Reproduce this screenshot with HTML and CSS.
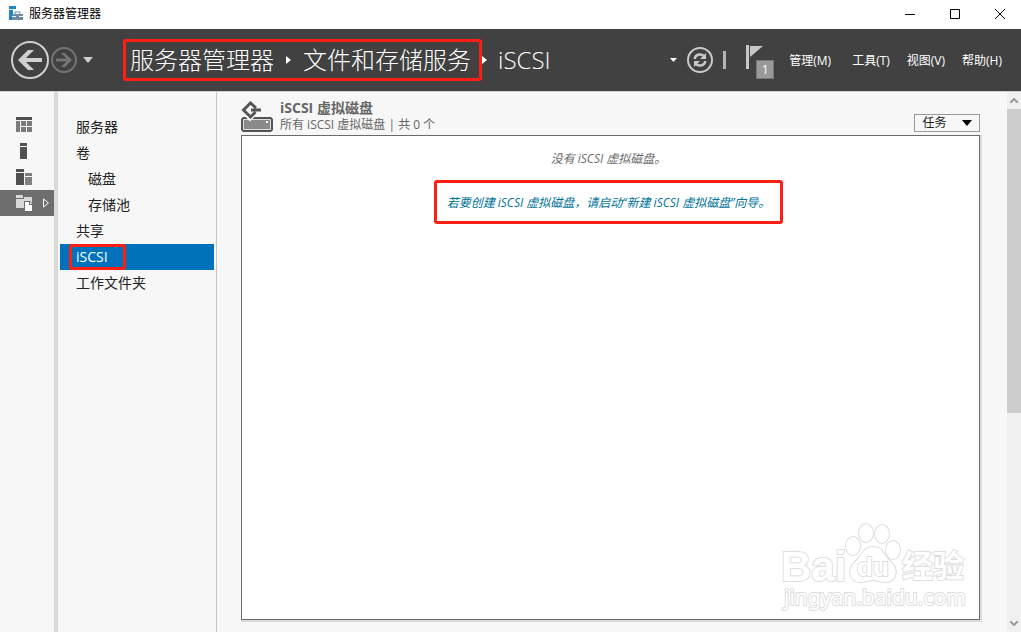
FILE: index.html
```html
<!DOCTYPE html>
<html lang="zh-CN">

<head>
  <meta charset="utf-8">
  <meta name="viewport" content="width=device-width, initial-scale=1">
  <title>服务器管理器</title>
  <link rel="stylesheet" href="styles.css">
</head>
<body>
  <div class="titlebar">
    <svg class="app-icon" width="15" height="15" viewBox="0 0 15 15">
      <path fill="#1b87c9" d="M0 0h7v3H0zM0 4h4v10H0z"/>
      <path fill="#6f8ba3" d="M3 8h11v6H3z"/>
      <path fill="none" stroke="#6f8ba3" d="M6 8V6h5v2"/>
      <path stroke="#fff" d="M3 10.5h4M10 10.5h4"/>
    </svg>
    <h1>服务器管理器</h1>
    <div class="window-controls">
      <button aria-label="最小化"><svg width="10" height="10"><path d="M0 5.500h10"/></svg></button>
      <button aria-label="最大化"><svg width="10" height="10"><path d="M.5.5h9v9h-9z"/></svg></button>
      <button aria-label="关闭"><svg width="10" height="10"><path d="M0 0l10 10M10 0L0 10"/></svg></button>
    </div>
  </div>

  <header class="toolbar">
    <button class="back" aria-label="后退">
      <svg width="38" height="38" viewBox="0 0 38 38">
        <circle cx="19" cy="19" r="18" fill="none" stroke="#d0d0d0" stroke-width="2"/>
        <path fill="#d0d0d0" d="M7 19l10-10h6l-8 8h16v4H15l8 8h-6z"/>
      </svg>
    </button>
    <button class="forward" aria-label="前进">
      <svg width="26" height="26" viewBox="0 0 26 26">
        <circle cx="13" cy="13" r="12" fill="none" stroke="#747474" stroke-width="2"/>
        <path fill="#747474" d="M21 13l-7-7h-4l5.500 5.500H5v3h10.500L10 20h4z"/>
      </svg>
    </button>
    <button class="history" aria-label="历史记录">
      <svg width="10" height="6"><path fill="#d0d0d0" d="M0 0h10L5 6z"/></svg>
    </button>
    <nav class="breadcrumb" aria-label="路径">
      <span class="crumbs highlight">
        <a href="#">服务器管理器</a>
        <svg width="5" height="8"><path fill="#fff" d="M0 0l5 4-5 4z"/></svg>
        <a href="#">文件和存储服务</a>
      </span>
      <svg width="5" height="8"><path fill="#fff" d="M0 0l5 4-5 4z"/></svg>
      <a class="current" href="#">iSCSI</a>
    </nav>
    <div class="tools">
      <button aria-label="更多"><svg width="7" height="4"><path fill="#fff" d="M0 0h7L3.500 4z"/></svg></button>
      <button aria-label="刷新">
        <svg width="26" height="26" viewBox="0 0 26 26" fill="none" stroke="#c8c8c8" stroke-width="2">
          <circle cx="13" cy="13" r="12"/>
          <path d="M7.500 12c1-5 7-6 10-2.500M18.500 14c-1 5-7 6-10 2.500" stroke-width="2.500"/>
          <path d="M19 6v6h-6zM7 20v-6h6z" fill="#c8c8c8" stroke="none"/>
        </svg>
      </button>
      <span class="separator"></span>
      <button class="flag" aria-label="通知">
        <svg width="18" height="24"><path fill="#c8c8c8" d="M0 0h3v24H0zM4 1h13L4 12z"/></svg>
        <span class="badge">1</span>
      </button>
    </div>
    <div class="menu">
      <button class="manage">管理(M)</button>
      <button>工具(T)</button>
      <button>视图(V)</button>
      <button>帮助(H)</button>
    </div>
  </header>

  <div class="workspace">
    <nav class="rail" aria-label="页面">
      <a href="#" aria-label="仪表板">
        <svg width="16" height="16">
          <path fill="#505050" d="M0 0h16v3H0z"/>
          <path fill="#7b7b7b" d="M0 4h4v11H0zM5 4h5v5H5zM11 4h5v5h-5zM5 10h5v5H5zM11 10h5v5h-5z"/>
        </svg>
      </a>
      <a href="#" aria-label="本地服务器">
        <svg width="16" height="16"><path fill="#505050" d="M4 0h7v3H4zM4 4h7v12H4z"/></svg>
      </a>
      <a href="#" aria-label="所有服务器">
        <svg width="16" height="16">
          <path fill="#505050" d="M0 0h8v3H0zM0 4h8v12H0z"/>
          <path fill="#808080" d="M9 4h7v3H9zM9 8h7v8H9z"/>
        </svg>
      </a>
      <a class="selected" href="#" aria-label="文件和存储服务">
        <svg width="16" height="16">
          <path fill="#d9d9d9" d="M0 0h6l1 1v2H0zM0 4h8V2h8v11H0z"/>
          <path fill="#6e6e6e" d="M8 6h6l2 2v8H8z"/>
          <path fill="#fff" d="M9 7h4v3h3v6H9z"/>
          <path fill="#fff" d="M14 7l2 2h-2z"/>
        </svg>
        <svg class="arrow" width="7" height="10"><path fill="none" stroke="#fff" d="M.5 1l5 4-5 4z"/></svg>
      </a>
    </nav>

    <nav class="sections" aria-label="文件和存储服务">
      <a href="#">服务器</a>
      <a href="#">卷</a>
      <a class="sub" href="#">磁盘</a>
      <a class="sub" href="#">存储池</a>
      <a href="#">共享</a>
      <a class="selected" href="#"><span class="highlight">iSCSI</span></a>
      <a href="#">工作文件夹</a>
    </nav>

    <main>
      <div class="panel-head">
        <svg width="32" height="32" viewBox="0 0 32 32">
          <path fill="#555" d="M2 16h28l2 2v11l-2 2H2l-2-2V18z"/>
          <path fill="#898989" stroke="#ddd" d="M2.500 18.500h27v10h-27z"/>
          <path fill="#fff" d="M25 20h2v2h-2z"/>
          <path fill="none" stroke="#f7f7f7" stroke-width="5" d="M15 8L9 2.500 2.500 10 9 17l4-4"/>
          <path fill="none" stroke="#555" stroke-width="3" d="M15 7L9.500 2 2.500 9l7 7 5-5M10 9h10"/>
        </svg>
        <div class="panel-title">
          <h2>iSCSI 虚拟磁盘</h2>
          <p>所有 iSCSI 虚拟磁盘 | 共 0 个</p>
        </div>
        <button class="tasks">任务 <svg width="10" height="6"><path d="M0 0h10L5 6z"/></svg></button>
      </div>
      <div class="panel">
        <p>没有 iSCSI 虚拟磁盘。</p>
        <a class="highlight" href="#">若要创建 iSCSI 虚拟磁盘，请启动“新建 iSCSI 虚拟磁盘”向导。</a>
        <svg class="watermark" width="190" height="92" viewBox="0 0 190 92">
          <text class="brand" x="1" y="60">Bai</text>
          <ellipse cx="73" cy="25" rx="7" ry="9"/>
          <ellipse cx="86" cy="12" rx="7" ry="9"/>
          <ellipse cx="102" cy="13" rx="7" ry="9"/>
          <ellipse cx="113" cy="29" rx="7" ry="9"/>
          <path d="M93 26c-11 0-11 10-18 15-7 6-7 20 6 20 5 0 7-2 12-2s7 2 12 2c13 0 13-14 6-20-7-5-7-15-18-15z"/>
          <text class="paw" x="77" y="55">du</text>
          <text class="cjk" x="122" y="56">经验</text>
          <text class="url" x="4" y="84">jingyan.baidu.com</text>
        </svg>
      </div>
    </main>

    <div class="scrollbar">
      <button aria-label="向上滚动"><svg width="8" height="5"><path d="M0 5l4-4 4 4"/></svg></button>
      <div class="track"><div class="thumb"></div></div>
      <button aria-label="向下滚动"><svg width="8" height="5"><path d="M0 0l4 4 4-4"/></svg></button>
    </div>
  </div>
</body>
</html>
```

FILE: styles.css
```css
* {
  box-sizing: border-box;
}

body {
  display: flex;
  flex-direction: column;
  min-height: 100vh;
  margin: 0;
  font: 12px/16px "Open Sans", "Noto Sans CJK SC", sans-serif;
  color: #222;
  background: #f7f7f7;
}

h1,
h2,
p {
  margin: 0;
}

a {
  color: inherit;
  text-decoration: none;
}

button {
  display: flex;
  align-items: center;
  justify-content: center;
  padding: 0;
  border: 0;
  background: none;
  color: inherit;
  font: inherit;
}

svg {
  display: block;
  flex: none;
}

.highlight {
  border: 3px solid #ff1e12;
  border-radius: 3px;
}

/* title bar */
.titlebar {
  display: flex;
  align-items: center;
  height: 29px;
  padding-left: 9px;
  padding-bottom: 2px;
  background: #fff;
}

.titlebar h1 {
  margin-left: 5px;
  font-size: 12px;
  font-weight: 400;
  color: #000;
}

.window-controls {
  display: flex;
  gap: 3px;
  margin-left: auto;
}

.window-controls button {
  width: 42px;
  height: 26px;
}

.window-controls path {
  fill: none;
  stroke: #000;
}

/* toolbar */
.toolbar {
  display: flex;
  align-items: center;
  height: 63px;
  padding: 0 19px 0 11px;
  border-bottom: 1px solid #d0d0d0;
  background: #414141;
  color: #fff;
}

.forward {
  margin-left: 2px;
}

.history {
  margin-left: 6px;
}

.breadcrumb {
  display: flex;
  align-items: center;
  margin-left: 30px;
  font-size: 24px;
  line-height: 36px;
  font-weight: 300;
  white-space: nowrap;
}

.crumbs {
  display: flex;
  align-items: center;
  gap: 12px;
  padding: 0 8px 0 4px;
}

.current {
  margin-left: 11px;
}

.tools {
  display: flex;
  align-items: center;
  margin-left: auto;
  gap: 10px;
}

.separator {
  width: 3px;
  height: 18px;
  background: #b4b4b4;
}

.flag {
  position: relative;
  width: 28px;
  height: 34px;
  margin: 4px 0 0 10px;
  align-items: flex-start;
  justify-content: flex-start;
}

.badge {
  position: absolute;
  right: 0;
  bottom: 0;
  width: 18px;
  height: 19px;
  border: 1px solid #777;
  background: #999;
  line-height: 18px;
}

.menu {
  display: flex;
  gap: 17px;
  margin-left: 15px;
  padding-top: 2px;
}

.manage {
  margin-right: 4px;
}

/* workspace */
.workspace {
  display: flex;
  flex: 1;
}

.rail {
  width: 58px;
  padding-top: 20px;
  border-right: 4px solid #dadada;
}

.rail a {
  display: flex;
  align-items: center;
  height: 26px;
  padding-left: 16px;
}

.rail .selected {
  background: #6e6e6e;
}

.rail .arrow {
  margin-left: 11px;
}

.sections {
  width: 159px;
  padding: 22px 2px 0;
  border-right: 1px solid #c6c6c6;
  font-size: 14px;
  line-height: 26px;
}

.sections a {
  display: block;
  height: 26px;
  padding-left: 16px;
}

.sections .sub {
  padding-left: 28px;
}

.sections .selected {
  display: flex;
  padding-left: 9px;
  background: #0072bc;
  color: #fff;
}

.sections .highlight {
  width: 57px;
  padding-left: 4px;
  line-height: 20px;
}

main {
  display: flex;
  flex: 1;
  flex-direction: column;
  padding: 0 27px 12px 24px;
}

.panel-head {
  display: flex;
  align-items: flex-end;
  height: 43px;
  padding-bottom: 2px;
  color: #666;
}

.panel-title {
  margin-left: 7px;
}

.panel-title h2 {
  font-size: 14px;
  line-height: 18px;
}

.tasks {
  gap: 15px;
  width: 66px;
  height: 18px;
  margin-left: auto;
  margin-bottom: 1px;
  border: 1px solid #999;
  color: #222;
}

.panel {
  position: relative;
  display: flex;
  flex: 1;
  flex-direction: column;
  align-items: center;
  padding: 15px 4px 0 0;
  border: 1px solid #6a6a6a;
  box-shadow: 1px 1px 0 1px #dadada;
  background: #fff;
  font-style: italic;
  color: #6a6a6a;
}

.panel a {
  margin-top: 13px;
  padding: 12px 10px 10px;
  color: #007299;
}

/* watermark over the empty list */
.watermark {
  position: absolute;
  right: 9px;
  bottom: 6px;
  fill: #fff;
  stroke: #dedede;
  stroke-width: 2;
  paint-order: stroke;
  font-style: normal;
  font-weight: 700;
}

.brand {
  font-family: "Liberation Sans", sans-serif;
  font-size: 42px;
}

.paw {
  font-family: "Liberation Sans", sans-serif;
  font-size: 26px;
}

.cjk {
  font-size: 31px;
}

.url {
  font-family: "Noto Sans", sans-serif;
  font-size: 21px;
  font-weight: 400;
}

/* scrollbar */
.scrollbar {
  display: flex;
  flex-direction: column;
  width: 14px;
  background: #f0f0f0;
}

.scrollbar button {
  height: 17px;
}

.scrollbar path {
  fill: none;
  stroke: #999;
  stroke-width: 2;
}

.track {
  display: flex;
  flex-direction: column;
  flex: 1;
}

.thumb {
  flex: 0 0 60%;
  background: #cdcdcd;
}
```
